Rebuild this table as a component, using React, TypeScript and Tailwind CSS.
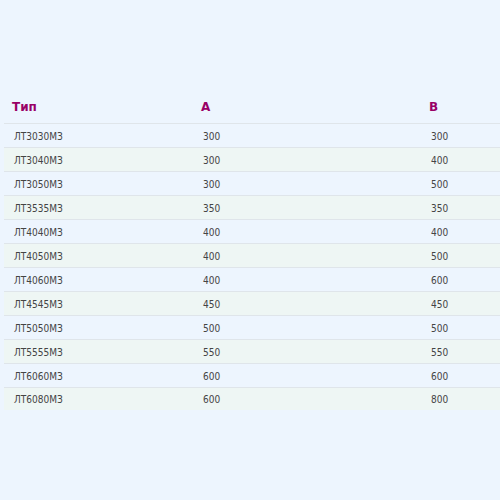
const rows: [string, string, string][] = [
  ["ЛТ3030МЗ", "300", "300"],
  ["ЛТ3040МЗ", "300", "400"],
  ["ЛТ3050МЗ", "300", "500"],
  ["ЛТ3535МЗ", "350", "350"],
  ["ЛТ4040МЗ", "400", "400"],
  ["ЛТ4050МЗ", "400", "500"],
  ["ЛТ4060МЗ", "400", "600"],
  ["ЛТ4545МЗ", "450", "450"],
  ["ЛТ5050МЗ", "500", "500"],
  ["ЛТ5555МЗ", "550", "550"],
  ["ЛТ6060МЗ", "600", "600"],
  ["ЛТ6080МЗ", "600", "800"],
];

export default function App() {
  return (
    <div className="min-h-[500px] w-full bg-[#edf5fe] pt-[91px] pl-1 font-['DejaVu_Sans',sans-serif]">
      <table className="w-[496px] table-fixed border-collapse">
        <colgroup>
          <col className="w-[189px]" />
          <col className="w-[228px]" />
          <col className="w-[79px]" />
        </colgroup>
        <thead>
          <tr className="h-[32px] border-b border-[#dfe5ea]">
            <th className="pl-2 text-left text-[12px] font-bold text-[#990066]">Тип</th>
            <th className="pl-2 text-left text-[12px] font-bold text-[#990066]">A</th>
            <th className="pl-2 text-left text-[12px] font-bold text-[#990066]">В</th>
          </tr>
        </thead>
        <tbody className="font-['DejaVu_Sans_Condensed','DejaVu_Sans',sans-serif]">
          {rows.map((r, i) => (
            <tr
              key={r[0]}
              className={
                (i % 2 === 1 ? "bg-[#eef6f4] " : "") +
                (i < rows.length - 1 ? "h-[24px] border-b border-[#dfe5ea]" : "h-[23px]")
              }
            >
              <td className="pl-[10px] pt-[2px] text-[10px] text-[#444]">{r[0]}</td>
              <td className="pl-[10px] pt-[2px] text-[10px] text-[#444]">{r[1]}</td>
              <td className="pl-[10px] pt-[2px] text-[10px] text-[#444]">{r[2]}</td>
            </tr>
          ))}
        </tbody>
      </table>
    </div>
  );
}
